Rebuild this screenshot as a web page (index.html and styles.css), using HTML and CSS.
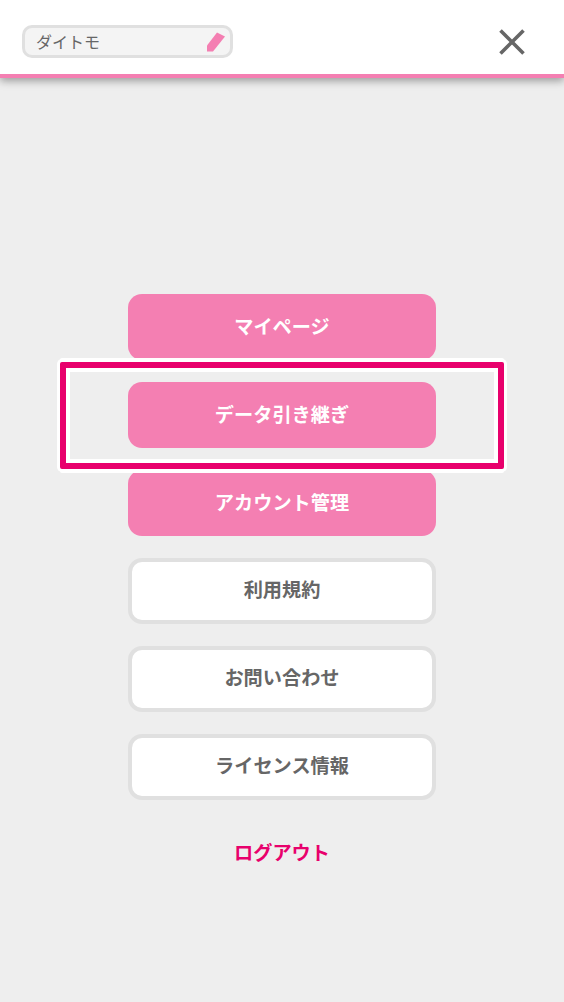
FILE: index.html
```html
<!DOCTYPE html>
<html lang="ja">
<head>
<meta charset="utf-8">
<title>メニュー</title>
<link rel="stylesheet" href="styles.css">
</head>
<body>
<header class="header">
  <div class="name-field">
    <span class="name-text">ダイトモ</span>
    <svg class="pencil" viewBox="0 0 20 20" width="20" height="20" aria-hidden="true"><path d="M11 0.5 L19 4.5 L7 19.5 L1 19.5 L1 13.5 Z" fill="#f47fb2"/></svg>
  </div>
  <button class="close" aria-label="閉じる">
    <svg viewBox="0 0 26 26" width="26" height="26" aria-hidden="true"><path d="M1.5 1.5 L24.5 24.5 M24.5 1.5 L1.5 24.5" stroke="#666" stroke-width="3.6" fill="none"/></svg>
  </button>
</header>
<main class="menu">
  <a class="btn btn-pink">マイページ</a>
  <a class="btn btn-pink btn-focus">データ引き継ぎ</a>
  <a class="btn btn-pink">アカウント管理</a>
  <a class="btn btn-white">利用規約</a>
  <a class="btn btn-white">お問い合わせ</a>
  <a class="btn btn-white">ライセンス情報</a>
  <a class="logout">ログアウト</a>
</main>
</body>
</html>
```
FILE: styles.css
```css
* { box-sizing: border-box; }
html, body { margin: 0; height: 100%; }
body {
  background: #eeeeee;
  font-family: "Noto Sans CJK JP", "Noto Sans", sans-serif;
  overflow: hidden;
}
.header {
  height: 78px;
  background: #fff;
  border-bottom: 4px solid #f47fb2;
  box-shadow: 0 3px 8px rgba(0, 0, 0, 0.35);
  display: flex;
  align-items: center;
  justify-content: space-between;
  padding: 9px 39px 0 22px;
}
.name-field {
  width: 211px;
  height: 33px;
  background: #f4f4f4;
  border: 3px solid #e0e0e0;
  border-radius: 10px;
  display: flex;
  align-items: center;
  justify-content: space-between;
  padding: 0 4px 0 11px;
}
.name-text { font-size: 16px; color: #666; line-height: 1; padding-bottom: 2px; }
.pencil { display: block; }
.close {
  width: 26px;
  height: 26px;
  padding: 0;
  border: 0;
  background: none;
  display: block;
}
.close svg { display: block; }
.menu {
  display: flex;
  flex-direction: column;
  align-items: center;
  gap: 22px;
  padding-top: 216px;
}
.btn {
  width: 308px;
  height: 66px;
  border-radius: 14px;
  display: flex;
  align-items: center;
  justify-content: center;
  font-size: 19.2px;
  font-weight: 700;
  line-height: 1;
}
.btn-pink { background: #f47fb2; color: #fff; }
.btn-white { background: #fff; color: #666; border: 4px solid #e0e0e0; padding-bottom: 2px; }
.btn-focus { position: relative; }
.btn-focus::before {
  content: "";
  position: absolute;
  left: -68px;
  right: -68px;
  top: -20px;
  bottom: -21px;
  border: 6px solid #e8006c;
  border-radius: 2px;
  box-shadow:
    inset 0 0 0 4px #fff,
    0 0 0 3px #fff,
    0 -4px 0 0 #fff,
    0 4px 0 0 #fff;
}
.logout {
  margin-top: 16px;
  font-size: 19.2px;
  font-weight: 700;
  line-height: 28px;
  color: #e8006c;
}
```
